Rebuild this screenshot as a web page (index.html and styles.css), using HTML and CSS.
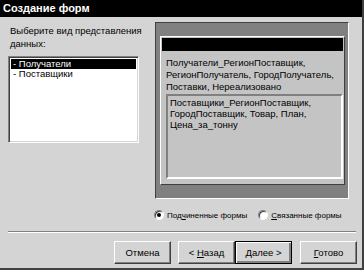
FILE: index.html
```html
<html lang="ru">

<head>
    <meta charset="UTF-8">
    <title>Создание форм</title>
    <link rel="stylesheet" href="styles.css">
</head>

<body>
    <!-- Form wizard dialog -->
    <div class="window">
        <div class="titlebar">Создание форм</div>

        <div class="content">
            <div class="left">
                <p class="prompt">Выберите вид представления<br>данных:</p>
                <ul class="list">
                    <li class="selected">- Получатели</li>
                    <li>- Поставщики</li>
                </ul>
            </div>

            <div class="right">
                <div class="frame">
                    <div class="form">
                        <div class="form-bar"></div>
                        <p class="fields">Получатели_РегионПоставщик,<br>РегионПолучатель, ГородПолучатель,<br>Поставки, Нереализовано</p>
                        <div class="subform">
                            <p>Поставщики_РегионПоставщик,<br>ГородПоставщик, Товар, План,<br>Цена_за_тонну</p>
                        </div>
                    </div>
                </div>

                <div class="radios">
                    <label class="radio-item"><span class="radio checked"></span>Под<u>ч</u>иненные формы</label>
                    <label class="radio-item"><span class="radio"></span><u>С</u>вязанные формы</label>
                </div>
            </div>
        </div>

        <div class="separator"></div>

        <div class="buttons">
            <button class="btn cancel">Отмена</button>
            <button class="btn">&lt; <u>Н</u>азад</button>
            <button class="btn default"><u>Д</u>алее &gt;</button>
            <button class="btn finish"><u>Г</u>отово</button>
        </div>
    </div>
</body>

</html>
```

FILE: styles.css
```css
body {
    margin: 0;
    padding: 0;
    font-family: "Liberation Sans", Arial, sans-serif;
    font-size: 9.5px;
    color: #000;
    background-color: #d4d4d4;
}

.window {
    width: 364px;
    height: 270px;
    box-sizing: border-box;
    background-color: #d4d4d4;
    border-right: 2px solid #404040;
    border-bottom: 2px solid #404040;
    display: flex;
    flex-direction: column;
}

.titlebar {
    height: 17px;
    line-height: 17px;
    padding-left: 3px;
    background-color: #000;
    color: #fff;
    font-size: 11px;
    font-weight: bold;
}

.content {
    display: flex;
    padding: 5px 0 0 8px;
}

.left {
    width: 131px;
    margin-right: 16px;
}

.prompt {
    margin: 2px 0 6px 2px;
    line-height: 13px;
    white-space: nowrap;
}

.list {
    list-style: none;
    margin: 0;
    padding: 1px 1px;
    height: 83px;
    background-color: #fff;
    border: 1px solid;
    border-color: #808080 #fff #fff #808080;
    box-shadow: inset 1px 1px #404040, inset -1px -1px #d4d4d4;
}

.list li {
    height: 10px;
    line-height: 10px;
    padding-left: 2px;
    margin: 0 1px;
}

.list li.selected {
    margin-top: 1px;
    background-color: #000;
    color: #fff;
}

.right {
    width: 194px;
}

.frame {
    height: 149px;
    padding: 13px 3px 13px 4px;
    background-color: #808080;
    border: 1px solid;
    border-color: #404040 #fff #fff #404040;
}

.form {
    height: 145px;
    padding: 1px;
    background-color: #c4c4c4;
    border: 1px solid;
    border-color: #fff #404040 #404040 #fff;
}

.form-bar {
    height: 13px;
    background-color: #000;
}

.fields {
    margin: 6px 0 1px 4px;
    line-height: 12px;
    white-space: nowrap;
}

.subform {
    width: 169px;
    height: 81px;
    margin-left: 4px;
    padding: 0 2px;
    border: 2px solid;
    border-color: #808080 #fff #fff #808080;
}

.subform p {
    margin: 1px 0 0 0;
    line-height: 11px;
    white-space: nowrap;
}

.radios {
    display: flex;
    gap: 11px;
    margin-top: 10px;
    height: 12px;
    align-items: center;
    white-space: nowrap;
    font-size: 8px;
}

.radio-item {
    display: flex;
    align-items: center;
}

.radio-item:first-child {
    margin-left: -1px;
}

.radio {
    width: 8px;
    height: 8px;
    margin-right: 3px;
    border-radius: 50%;
    background-color: #fff;
    border: 1px solid;
    border-color: #808080 #fff #fff #808080;
    box-shadow: inset 1px 1px #404040;
    display: flex;
    align-items: center;
    justify-content: center;
}

.radio.checked::after {
    content: "";
    width: 4px;
    height: 4px;
    border-radius: 50%;
    background-color: #000;
}

.separator {
    margin: 10px 6px 0 8px;
    height: 1px;
    background-color: #808080;
    border-bottom: 1px solid #fff;
}

.buttons {
    display: flex;
    justify-content: flex-end;
    padding: 8px 5px 0 0;
}

.btn {
    width: 57px;
    height: 23px;
    padding: 0;
    font-family: inherit;
    font-size: 9.5px;
    color: #000;
    background-color: #d4d4d4;
    border: 1px solid;
    border-color: #fff #404040 #404040 #fff;
    box-shadow: inset -1px -1px #808080;
}

.btn.cancel {
    margin-right: 7px;
}

.btn.default {
    border: 1px solid #000;
    box-shadow: inset 1px 1px #fff, inset -2px -2px #808080, inset -1px -1px #404040;
}

.btn.finish {
    margin-left: 8px;
}
```
